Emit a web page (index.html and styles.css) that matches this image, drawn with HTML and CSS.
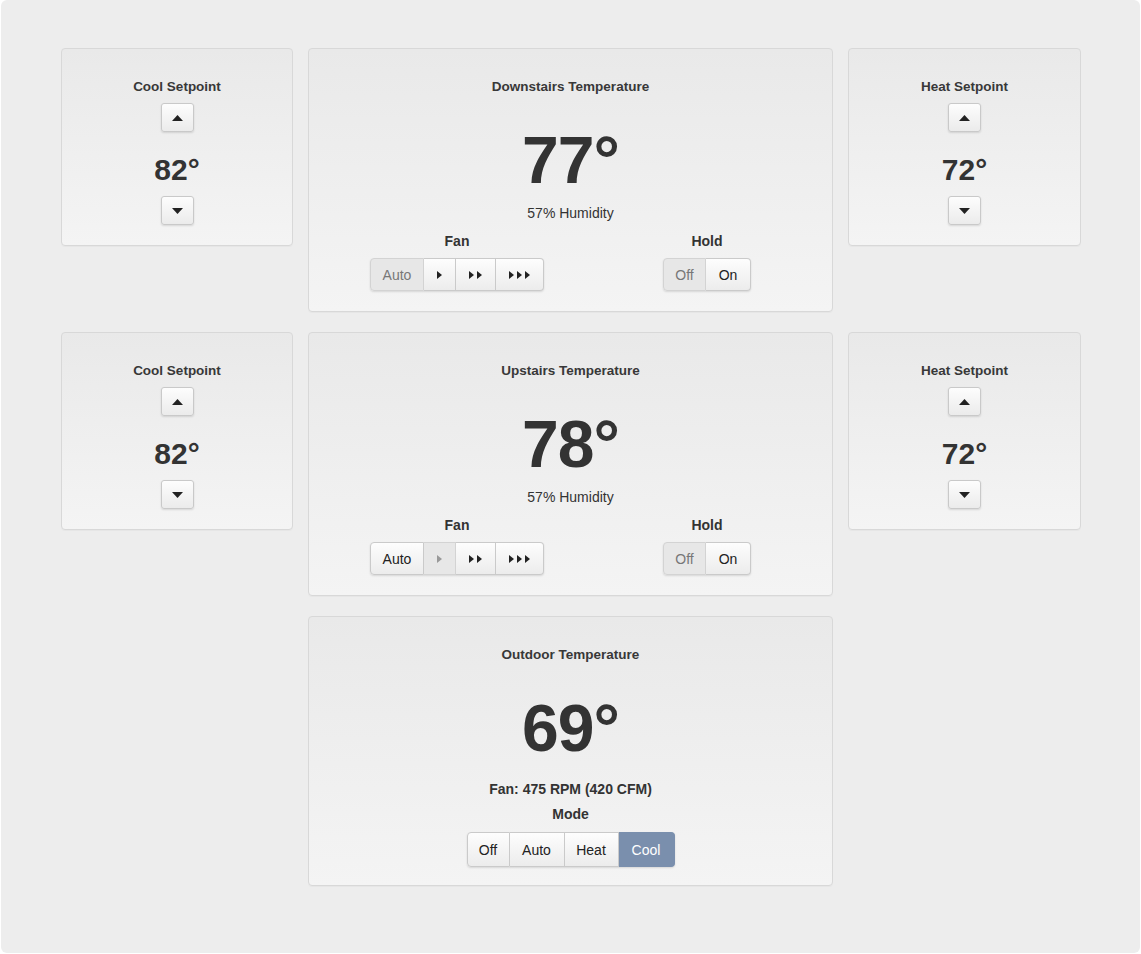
FILE: index.html
```html
<!DOCTYPE html>
<html>
<head>
<meta charset="utf-8">
<link rel="stylesheet" href="styles.css">
</head>
<body>
<div class="page">
  <div class="grid">
    <section class="tile setpoint">
      <h2 class="title">Cool Setpoint</h2>
      <button class="step"><svg width="11" height="6" viewBox="0 0 11 6"><polygon points="0,6 5.5,0 11,6" fill="#222"/></svg></button>
      <div class="setval">82°</div>
      <button class="step"><svg width="11" height="6" viewBox="0 0 11 6"><polygon points="0,0 5.5,6 11,0" fill="#222"/></svg></button>
    </section>
    <section class="tile zone">
      <h2 class="title">Downstairs Temperature</h2>
      <div class="big">77°</div>
      <div class="sub">57% Humidity</div>
      <div class="controls">
        <div class="ctl">
          <div class="label">Fan</div>
          <div class="seg">
            <span class="btn w-auto sel">Auto</span>
            <span class="btn w-1"><svg width="5" height="8" viewBox="0 0 5 8"><polygon points="0,0 5,4 0,8" fill="#222"/></svg></span>
            <span class="btn w-2"><svg width="13" height="8" viewBox="0 0 13 8"><polygon points="0,0 5,4 0,8" fill="#222"/><polygon points="8,0 13,4 8,8" fill="#222"/></svg></span>
            <span class="btn w-3"><svg width="21" height="8" viewBox="0 0 21 8"><polygon points="0,0 5,4 0,8" fill="#222"/><polygon points="8,0 13,4 8,8" fill="#222"/><polygon points="16,0 21,4 16,8" fill="#222"/></svg></span>
          </div>
        </div>
        <div class="ctl">
          <div class="label">Hold</div>
          <div class="seg">
            <span class="btn w-off sel">Off</span>
            <span class="btn w-on">On</span>
          </div>
        </div>
      </div>
    </section>
    <section class="tile setpoint">
      <h2 class="title">Heat Setpoint</h2>
      <button class="step"><svg width="11" height="6" viewBox="0 0 11 6"><polygon points="0,6 5.5,0 11,6" fill="#222"/></svg></button>
      <div class="setval">72°</div>
      <button class="step"><svg width="11" height="6" viewBox="0 0 11 6"><polygon points="0,0 5.5,6 11,0" fill="#222"/></svg></button>
    </section>

    <section class="tile setpoint">
      <h2 class="title">Cool Setpoint</h2>
      <button class="step"><svg width="11" height="6" viewBox="0 0 11 6"><polygon points="0,6 5.5,0 11,6" fill="#222"/></svg></button>
      <div class="setval">82°</div>
      <button class="step"><svg width="11" height="6" viewBox="0 0 11 6"><polygon points="0,0 5.5,6 11,0" fill="#222"/></svg></button>
    </section>
    <section class="tile zone">
      <h2 class="title">Upstairs Temperature</h2>
      <div class="big">78°</div>
      <div class="sub">57% Humidity</div>
      <div class="controls">
        <div class="ctl">
          <div class="label">Fan</div>
          <div class="seg">
            <span class="btn w-auto">Auto</span>
            <span class="btn w-1 sel"><svg width="5" height="8" viewBox="0 0 5 8"><polygon points="0,0 5,4 0,8" fill="#999"/></svg></span>
            <span class="btn w-2"><svg width="13" height="8" viewBox="0 0 13 8"><polygon points="0,0 5,4 0,8" fill="#222"/><polygon points="8,0 13,4 8,8" fill="#222"/></svg></span>
            <span class="btn w-3"><svg width="21" height="8" viewBox="0 0 21 8"><polygon points="0,0 5,4 0,8" fill="#222"/><polygon points="8,0 13,4 8,8" fill="#222"/><polygon points="16,0 21,4 16,8" fill="#222"/></svg></span>
          </div>
        </div>
        <div class="ctl">
          <div class="label">Hold</div>
          <div class="seg">
            <span class="btn w-off sel">Off</span>
            <span class="btn w-on">On</span>
          </div>
        </div>
      </div>
    </section>
    <section class="tile setpoint">
      <h2 class="title">Heat Setpoint</h2>
      <button class="step"><svg width="11" height="6" viewBox="0 0 11 6"><polygon points="0,6 5.5,0 11,6" fill="#222"/></svg></button>
      <div class="setval">72°</div>
      <button class="step"><svg width="11" height="6" viewBox="0 0 11 6"><polygon points="0,0 5.5,6 11,0" fill="#222"/></svg></button>
    </section>

    <section class="tile zone outdoor">
      <h2 class="title">Outdoor Temperature</h2>
      <div class="big">69°</div>
      <div class="fanline">Fan: 475 RPM (420 CFM)</div>
      <div class="label mode-label">Mode</div>
      <div class="seg mode">
        <span class="btn m-off">Off</span>
        <span class="btn m-auto">Auto</span>
        <span class="btn m-heat">Heat</span>
        <span class="btn m-cool active">Cool</span>
      </div>
    </section>
  </div>
</div>
</body>
</html>
```

FILE: styles.css
```css
* { box-sizing: border-box; }
html, body { margin: 0; padding: 0; background: #ffffff; }
body {
  font-family: "Liberation Sans", Arial, Helvetica, sans-serif;
  color: #333;
}
.page {
  margin: 0 1px;
  height: 953px;
  background: #ededed;
  border-radius: 6px;
  padding: 48px 60px 0 60px;
}
.grid {
  display: grid;
  grid-template-columns: 232px 525px 233px;
  column-gap: 15px;
  row-gap: 20px;
  align-items: start;
}
.tile {
  border: 1px solid #d8d8d8;
  border-radius: 4px;
  background: linear-gradient(#e9e9e9, #f4f4f4);
  box-shadow: 0 1px 1px rgba(0,0,0,0.03);
  display: flex;
  flex-direction: column;
  align-items: center;
  padding: 29px 0 20px;
}
.zone { padding-bottom: 20px; }
.outdoor { grid-column: 2; padding-bottom: 18px; }
.title {
  margin: 0;
  font-size: 13.5px;
  line-height: 17px;
  font-weight: bold;
  color: #383838;
}
.step {
  margin: 8px 0 0;
  width: 33px;
  height: 29px;
  border: 1px solid #c9c9c9;
  border-radius: 3px;
  background: linear-gradient(#fdfdfd, #ebebeb);
  box-shadow: 0 1px 2px rgba(0,0,0,0.12);
  display: flex;
  align-items: center;
  justify-content: center;
  padding: 0;
}
.setval {
  margin: 20px 0 0;
  font-size: 30px;
  line-height: 36px;
  font-weight: bold;
  color: #333;
}
.setval + .step { margin-top: 8px; }
.big {
  margin-top: 31px;
  font-size: 66px;
  line-height: 68px;
  font-weight: bold;
  letter-spacing: -1px;
  color: #333;
}
.sub {
  margin-top: 11px;
  font-size: 14px;
  line-height: 17px;
  color: #333;
}
.controls {
  align-self: stretch;
  display: flex;
  justify-content: space-between;
  padding: 0 81px 0 61px;
  margin-top: 11px;
}
.ctl {
  display: flex;
  flex-direction: column;
  align-items: center;
}
.label {
  font-size: 14px;
  line-height: 17px;
  font-weight: bold;
  color: #333;
}
.seg {
  display: flex;
  margin-top: 8px;
  border-radius: 4px;
  box-shadow: 0 1px 2px rgba(0,0,0,0.12);
}
.btn {
  height: 33px;
  display: flex;
  align-items: center;
  justify-content: center;
  font-size: 14px;
  color: #222;
  border: 1px solid #cacaca;
  border-left-width: 0;
  background: linear-gradient(#fdfdfd, #ececec);
}
.btn:first-child { border-left-width: 1px; border-radius: 4px 0 0 4px; }
.btn:last-child { border-radius: 0 4px 4px 0; }
.btn.sel {
  background: #e7e7e7;
  color: #777;
  border-color: #d3d3d3;
}
.btn.active {
  background: #7a8fad;
  border-color: #7a8fad;
  color: #fff;
}
.w-auto { width: 54px; }
.w-1 { width: 32px; }
.w-2 { width: 40px; }
.w-3 { width: 48px; }
.w-off { width: 43px; }
.w-on { width: 45px; }
.fanline {
  margin-top: 19px;
  font-size: 14px;
  line-height: 17px;
  font-weight: bold;
  color: #333;
}
.mode-label { margin-top: 8px; }
.mode { margin-top: 9px; }
.mode .btn { height: 35px; }
.m-off { width: 43px; }
.m-auto { width: 55px; }
.m-heat { width: 54px; }
.m-cool { width: 56px; }
```
